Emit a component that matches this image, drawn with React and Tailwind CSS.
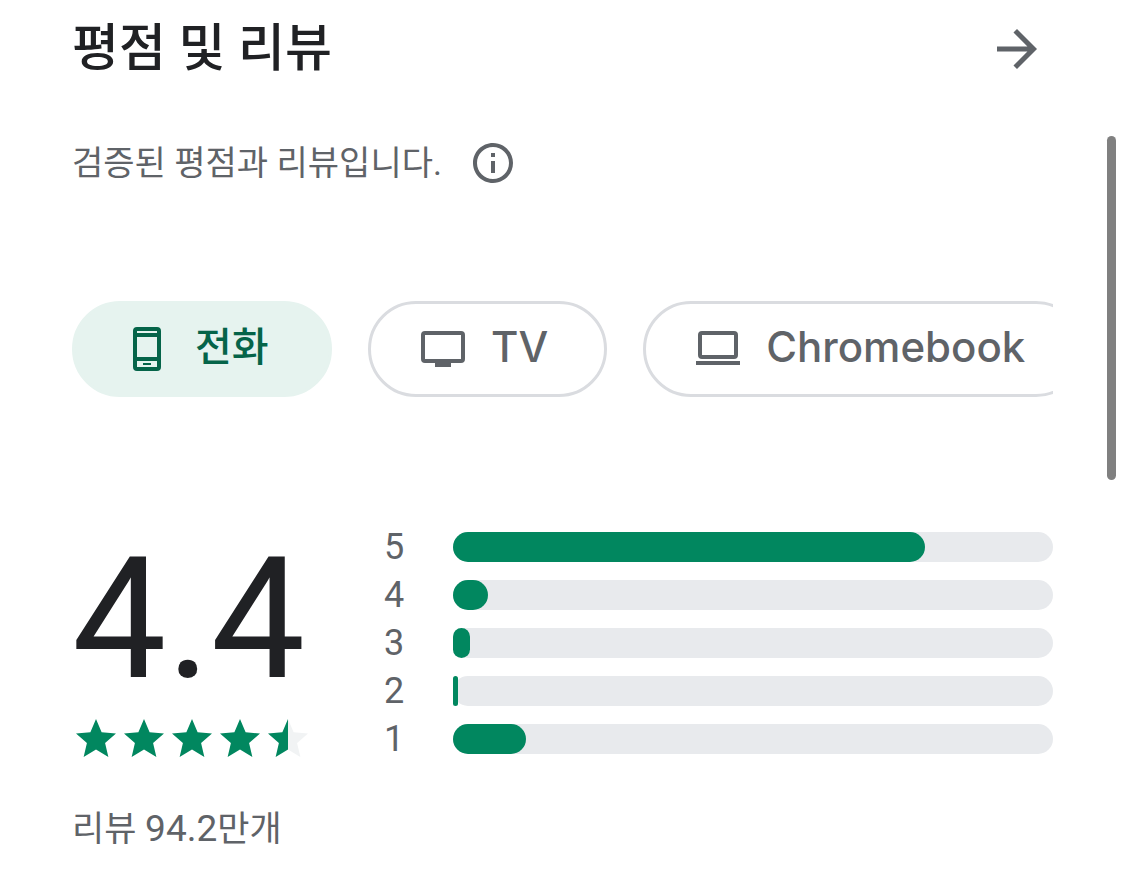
import React, { useState } from "react";

const PhoneIcon = () => (
  <svg viewBox="0 0 24 24" className="size-12 shrink-0" fill="currentColor" fillRule="evenodd" aria-hidden="true">
    <path d="M7 1h10a2 2 0 0 1 2 2v18a2 2 0 0 1-2 2H7a2 2 0 0 1-2-2V3a2 2 0 0 1 2-2zM7 3v1h10V3zM7 6v10h10V6zM7 18v3h10v-3zM10 19h4v1h-4z" />
  </svg>
);

const TvIcon = () => (
  <svg viewBox="0 0 24 24" className="size-12 shrink-0" fill="currentColor" fillRule="evenodd" aria-hidden="true">
    <path d="M3 3h18a2 2 0 0 1 2 2v12a2 2 0 0 1-2 2h-5v2H8v-2H3a2 2 0 0 1-2-2V5a2 2 0 0 1 2-2zM3 5v12h18V5z" />
  </svg>
);

const LaptopIcon = () => (
  <svg viewBox="0 0 24 24" className="size-12 shrink-0" fill="currentColor" fillRule="evenodd" aria-hidden="true">
    <path d="M4 3h16a2 2 0 0 1 2 2v10a2 2 0 0 1-2 2H4a2 2 0 0 1-2-2V5a2 2 0 0 1 2-2zM4 5v10h16V5zM1 18h22v2H1z" />
  </svg>
);

const ArrowIcon = () => (
  <svg viewBox="0 0 24 24" className="size-15" fill="currentColor" aria-hidden="true">
    <path d="M12 4l-1.41 1.41L16.17 11H4v2h12.17l-5.58 5.59L12 20l8-8z" />
  </svg>
);

const InfoIcon = () => (
  <svg viewBox="0 0 24 24" className="size-12" fill="currentColor" aria-hidden="true">
    <path d="M11 7h2v2h-2zm0 4h2v6h-2zm1-9C6.48 2 2 6.48 2 12s4.48 10 10 10 10-4.48 10-10S17.52 2 12 2zm0 18c-4.41 0-8-3.59-8-8s3.59-8 8-8 8 3.59 8 8-3.59 8-8 8z" />
  </svg>
);

const STAR =
  "M12 17.27L18.18 21l-1.64-7.03L22 9.24l-7.19-.61L12 2 9.19 8.63 2 9.24l5.46 4.73L5.82 21z";
const HALF_STAR = "M12 2 9.19 8.63 2 9.24l5.46 4.73L5.82 21 12 17.27z";

const Star = ({ half }) => (
  <svg viewBox="0 0 24 24" className="size-12" aria-hidden="true">
    <path d={STAR} className={half ? "fill-[#f1f3f4]" : "fill-[#01875f]"} />
    {half && <path d={HALF_STAR} className="fill-[#01875f]" />}
  </svg>
);

const devices = [
  { id: "phone", label: "전화", icon: <PhoneIcon />, size: "text-[40px]" },
  { id: "tv", label: "TV", icon: <TvIcon />, size: "text-[42px]" },
  { id: "chromebook", label: "Chromebook", icon: <LaptopIcon />, size: "text-[42px]" },
];

const ratings = [
  { stars: 5, percent: 78.7 },
  { stars: 4, percent: 5.8 },
  { stars: 3, percent: 2.8 },
  { stars: 2, percent: 0.9 },
  { stars: 1, percent: 12.2 },
];

const App = () => {
  const [device, setDevice] = useState("phone");

  return (
    <main className="relative min-h-screen overflow-hidden bg-white px-18 pt-[19px] pb-8 font-[Roboto,'Noto_Sans_CJK_KR',sans-serif] text-[#5f6368]">
      <header className="flex h-15 items-center justify-between pr-1.5">
        <h2 className="text-[51px] leading-15 font-medium text-[#202124]">
          평점 및 리뷰
        </h2>
        <button type="button" aria-label="평점 및 리뷰 더보기">
          <ArrowIcon />
        </button>
      </header>

      <div className="mt-15 flex items-center gap-[27px]">
        <p className="text-[34px] leading-12">검증된 평점과 리뷰입니다.</p>
        <button type="button" aria-label="자세히 알아보기">
          <InfoIcon />
        </button>
      </div>

      <div className="mt-[114px] flex gap-9 overflow-hidden">
        {devices.map((d) => (
          <button
            key={d.id}
            type="button"
            aria-pressed={device === d.id}
            onClick={() => setDevice(d.id)}
            className={`flex h-24 shrink-0 items-center gap-6 rounded-full border-3 pr-14 pl-12 font-[Inter,'Noto_Sans_CJK_KR',sans-serif] font-medium first:min-w-65 ${
              device === d.id
                ? "border-[#e6f3ef] bg-[#e6f3ef] text-[#056449]"
                : "border-[#dadce0] bg-white"
            }`}
          >
            {d.icon}
            <span className={`pb-1 leading-12 ${d.size}`}>{d.label}</span>
          </button>
        ))}
      </div>

      <section className="mt-[135px] flex">
        <div className="w-78 shrink-0">
          <div className="text-[168px] leading-[175px] text-[#202124]">4.4</div>
          <div className="mt-2 flex" role="img" aria-label="별표 5개 만점에 4.4개">
            <Star />
            <Star />
            <Star />
            <Star />
            <Star half />
          </div>
          <p className="mt-[42px] text-[35px] leading-12">
            리뷰 <span className="text-[37px]">94.2</span>만개
          </p>
        </div>

        <div className="flex grow flex-col gap-4.5">
          {ratings.map((r) => (
            <div key={r.stars} className="flex h-7.5 items-center">
              <span className="w-[69px] shrink-0 text-[36px] leading-7.5">
                {r.stars}
              </span>
              <div className="h-7.5 grow rounded-full bg-[#e8eaed]">
                <div
                  className="h-full rounded-full bg-[#01875f]"
                  style={{ width: `${r.percent}%` }}
                />
              </div>
            </div>
          ))}
        </div>
      </section>

      <div className="absolute top-34 right-[9px] h-86 w-[9px] rounded-full bg-[#808080]" />
    </main>
  );
};

export default App;
